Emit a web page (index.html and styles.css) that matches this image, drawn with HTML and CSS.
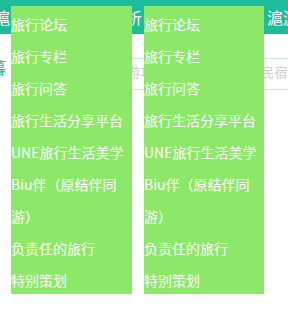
FILE: index.html
```html
<!DOCTYPE html>
<html lang="zh-CN">
  <head>
    <meta charset="UTF-8" />
    <title>旅行导航</title>
    <link rel="stylesheet" href="styles.css">
  </head>
  <body>
    <div class="page">
      <div class="header">
        <span class="nav-item nav-first">滬</span>
        <span class="nav-item nav-second">分析</span>
        <span class="nav-item nav-third">滬游</span>
      </div>

      <div class="search-row">
        <span class="logo">暮</span>
        <div class="search">游攻略、目的地、酒店民宿</div>
      </div>

      <!-- dropdown menus lie over the header and search box -->
      <ul class="dropdown dropdown-left">
        <li>旅行论坛</li>
        <li>旅行专栏</li>
        <li>旅行问答</li>
        <li>旅行生活分享平台</li>
        <li>UNE旅行生活美学</li>
        <li>Biu伴（原结伴同游）</li>
        <li>负责任的旅行</li>
        <li>特别策划</li>
      </ul>
      <ul class="dropdown dropdown-right">
        <li>旅行论坛</li>
        <li>旅行专栏</li>
        <li>旅行问答</li>
        <li>旅行生活分享平台</li>
        <li>UNE旅行生活美学</li>
        <li>Biu伴（原结伴同游）</li>
        <li>负责任的旅行</li>
        <li>特别策划</li>
      </ul>
    </div>
  </body>
</html>
```

FILE: styles.css
```css
/* Reset default margin and padding */
body,
ul,
li {
  margin: 0;
  padding: 0;
}

body {
  font-family: "Noto Sans CJK SC", "Noto Sans", sans-serif;
  background-color: #ffffff;
}

.page {
  position: relative;
  width: 288px;
  height: 319px;
  overflow: hidden;
}

/* Top navigation bar */
.header {
  display: flex;
  height: 34px;
  background-color: #1fbc9b;
  color: #ffffff;
  font-size: 16px;
  line-height: 34px;
  white-space: nowrap;
}

.nav-first {
  margin-left: -6px;
}

.nav-second {
  margin-left: 100px;
}

.nav-third {
  margin-left: 125px;
}

/* Logo and search box */
.search-row {
  display: flex;
  margin-top: 24px;
}

.logo {
  width: 10px;
  overflow: hidden;
  direction: rtl;
  color: #1fbc9b;
  font-size: 16px;
  line-height: 18px;
}

.search {
  margin-left: 110px;
  height: 26px;
  padding: 0 0 4px 11px;
  border-top: 1px solid #c4ebe1;
  border-bottom: 1px solid #c4ebe1;
  color: #cccccc;
  font-size: 13px;
  letter-spacing: 0.4px;
  line-height: 26px;
  white-space: nowrap;
}

/* Dropdown menus */
.dropdown {
  position: absolute;
  top: 6px;
  box-sizing: border-box;
  height: 288px;
  padding-top: 2px;
  list-style: none;
  background-color: #8de769;
  color: #ffffff;
  font-size: 14px;
  line-height: 32px;
}

.dropdown-left {
  left: 11px;
  width: 121px;
}

.dropdown-right {
  left: 144px;
  width: 120px;
}
```
